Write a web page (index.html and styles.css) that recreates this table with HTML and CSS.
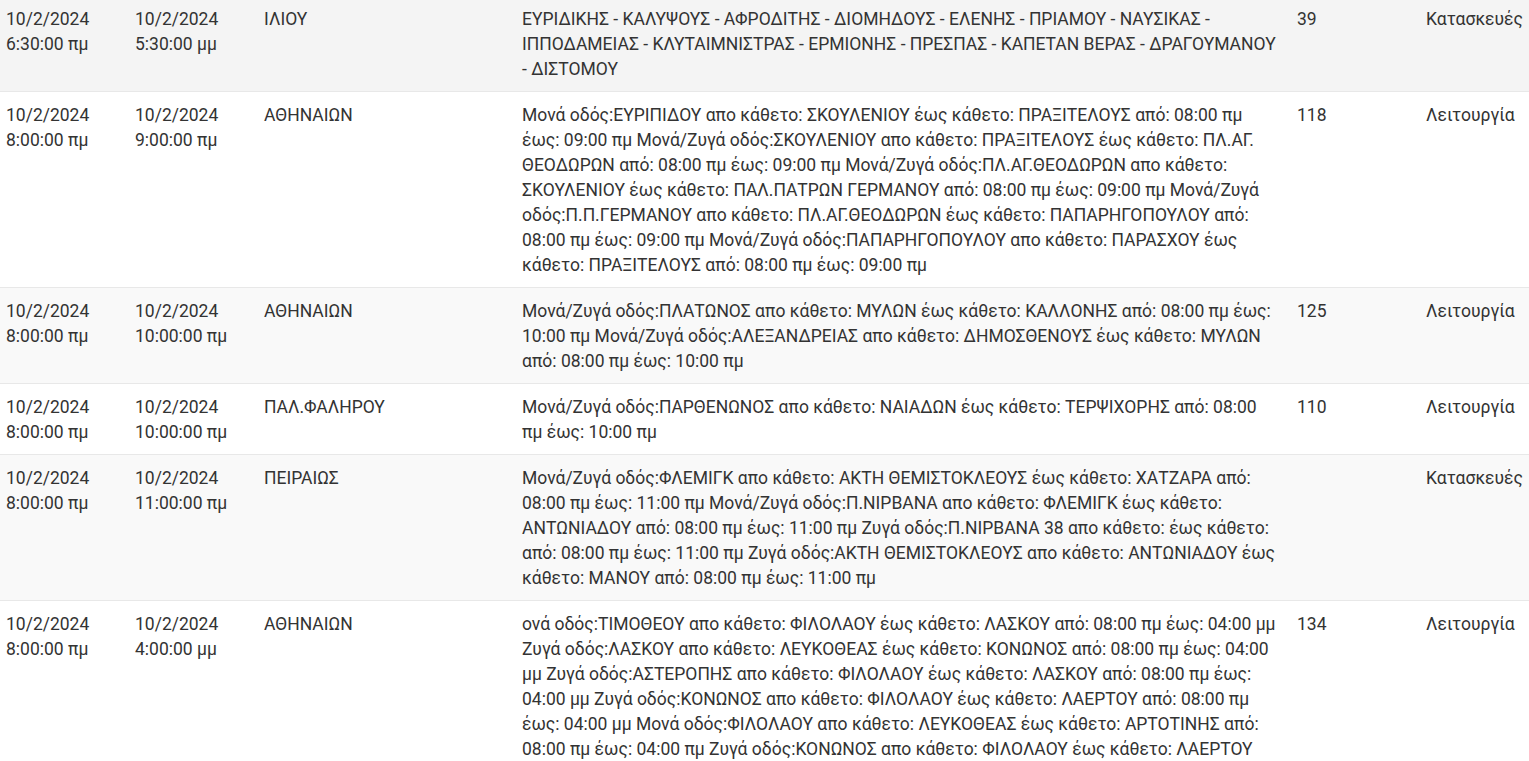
FILE: index.html
```html
<!DOCTYPE html>
<html lang="el">
<head>
<meta charset="utf-8">
<title>Έργα</title>
<link rel="stylesheet" href="styles.css">
</head>
<body>
<table class="works">
  <colgroup>
    <col class="c-date"><col class="c-date"><col class="c-area"><col class="c-desc"><col class="c-num"><col class="c-type">
  </colgroup>
  <tbody>
    <tr class="row hover">
      <td>10/2/2024 6:30:00 πμ</td>
      <td>10/2/2024 5:30:00 μμ</td>
      <td>ΙΛΙΟΥ</td>
      <td class="desc">ΕΥΡΙΔΙΚΗΣ - ΚΑΛΥΨΟΥΣ - ΑΦΡΟΔΙΤΗΣ - ΔΙΟΜΗΔΟΥΣ - ΕΛΕΝΗΣ - ΠΡΙΑΜΟΥ - ΝΑΥΣΙΚΑΣ - ΙΠΠΟΔΑΜΕΙΑΣ - ΚΛΥΤΑΙΜΝΙΣΤΡΑΣ - ΕΡΜΙΟΝΗΣ - ΠΡΕΣΠΑΣ - ΚΑΠΕΤΑΝ ΒΕΡΑΣ - ΔΡΑΓΟΥΜΑΝΟΥ - ΔΙΣΤΟΜΟΥ</td>
      <td>39</td>
      <td>Κατασκευές</td>
    </tr>
    <tr class="row">
      <td>10/2/2024 8:00:00 πμ</td>
      <td>10/2/2024 9:00:00 πμ</td>
      <td>ΑΘΗΝΑΙΩΝ</td>
      <td class="desc">Μονά οδός:ΕΥΡΙΠΙΔΟΥ απο κάθετο: ΣΚΟΥΛΕΝΙΟΥ έως κάθετο: ΠΡΑΞΙΤΕΛΟΥΣ από: 08:00 πμ έως: 09:00 πμ Μονά/Ζυγά οδός:ΣΚΟΥΛΕΝΙΟΥ απο κάθετο: ΠΡΑΞΙΤΕΛΟΥΣ έως κάθετο: ΠΛ.ΑΓ. ΘΕΟΔΩΡΩΝ από: 08:00 πμ έως: 09:00 πμ Μονά/Ζυγά οδός:ΠΛ.ΑΓ.ΘΕΟΔΩΡΩΝ απο κάθετο: ΣΚΟΥΛΕΝΙΟΥ έως κάθετο: ΠΑΛ.ΠΑΤΡΩΝ ΓΕΡΜΑΝΟΥ από: 08:00 πμ έως: 09:00 πμ Μονά/Ζυγά οδός:Π.Π.ΓΕΡΜΑΝΟΥ απο κάθετο: ΠΛ.ΑΓ.ΘΕΟΔΩΡΩΝ έως κάθετο: ΠΑΠΑΡΗΓΟΠΟΥΛΟΥ από: 08:00 πμ έως: 09:00 πμ Μονά/Ζυγά οδός:ΠΑΠΑΡΗΓΟΠΟΥΛΟΥ απο κάθετο: ΠΑΡΑΣΧΟΥ έως κάθετο: ΠΡΑΞΙΤΕΛΟΥΣ από: 08:00 πμ έως: 09:00 πμ</td>
      <td>118</td>
      <td>Λειτουργία</td>
    </tr>
    <tr class="row">
      <td>10/2/2024 8:00:00 πμ</td>
      <td>10/2/2024 10:00:00 πμ</td>
      <td>ΑΘΗΝΑΙΩΝ</td>
      <td class="desc">Μονά/Ζυγά οδός:ΠΛΑΤΩΝΟΣ απο κάθετο: ΜΥΛΩΝ έως κάθετο: ΚΑΛΛΟΝΗΣ από: 08:00 πμ έως: 10:00 πμ Μονά/Ζυγά οδός:ΑΛΕΞΑΝΔΡΕΙΑΣ απο κάθετο: ΔΗΜΟΣΘΕΝΟΥΣ έως κάθετο: ΜΥΛΩΝ από: 08:00 πμ έως: 10:00 πμ</td>
      <td>125</td>
      <td>Λειτουργία</td>
    </tr>
    <tr class="row">
      <td>10/2/2024 8:00:00 πμ</td>
      <td>10/2/2024 10:00:00 πμ</td>
      <td>ΠΑΛ.ΦΑΛΗΡΟΥ</td>
      <td class="desc">Μονά/Ζυγά οδός:ΠΑΡΘΕΝΩΝΟΣ απο κάθετο: ΝΑΙΑΔΩΝ έως κάθετο: ΤΕΡΨΙΧΟΡΗΣ από: 08:00 πμ έως: 10:00 πμ</td>
      <td>110</td>
      <td>Λειτουργία</td>
    </tr>
    <tr class="row">
      <td>10/2/2024 8:00:00 πμ</td>
      <td>10/2/2024 11:00:00 πμ</td>
      <td>ΠΕΙΡΑΙΩΣ</td>
      <td class="desc">Μονά/Ζυγά οδός:ΦΛΕΜΙΓΚ απο κάθετο: ΑΚΤΗ ΘΕΜΙΣΤΟΚΛΕΟΥΣ έως κάθετο: ΧΑΤΖΑΡΑ από: 08:00 πμ έως: 11:00 πμ Μονά/Ζυγά οδός:Π.ΝΙΡΒΑΝΑ απο κάθετο: ΦΛΕΜΙΓΚ έως κάθετο: ΑΝΤΩΝΙΑΔΟΥ από: 08:00 πμ έως: 11:00 πμ Ζυγά οδός:Π.ΝΙΡΒΑΝΑ 38 απο κάθετο: έως κάθετο: από: 08:00 πμ έως: 11:00 πμ Ζυγά οδός:ΑΚΤΗ ΘΕΜΙΣΤΟΚΛΕΟΥΣ απο κάθετο: ΑΝΤΩΝΙΑΔΟΥ έως κάθετο: ΜΑΝΟΥ από: 08:00 πμ έως: 11:00 πμ</td>
      <td></td>
      <td>Κατασκευές</td>
    </tr>
    <tr class="row">
      <td>10/2/2024 8:00:00 πμ</td>
      <td>10/2/2024 4:00:00 μμ</td>
      <td>ΑΘΗΝΑΙΩΝ</td>
      <td class="desc">ονά οδός:ΤΙΜΟΘΕΟΥ απο κάθετο: ΦΙΛΟΛΑΟΥ έως κάθετο: ΛΑΣΚΟΥ από: 08:00 πμ έως: 04:00 μμ Ζυγά οδός:ΛΑΣΚΟΥ απο κάθετο: ΛΕΥΚΟΘΕΑΣ έως κάθετο: ΚΟΝΩΝΟΣ από: 08:00 πμ έως: 04:00 μμ Ζυγά οδός:ΑΣΤΕΡΟΠΗΣ απο κάθετο: ΦΙΛΟΛΑΟΥ έως κάθετο: ΛΑΣΚΟΥ από: 08:00 πμ έως: 04:00 μμ Ζυγά οδός:ΚΟΝΩΝΟΣ απο κάθετο: ΦΙΛΟΛΑΟΥ έως κάθετο: ΛΑΕΡΤΟΥ από: 08:00 πμ έως: 04:00 μμ Μονά οδός:ΦΙΛΟΛΑΟΥ απο κάθετο: ΛΕΥΚΟΘΕΑΣ έως κάθετο: ΑΡΤΟΤΙΝΗΣ από: 08:00 πμ έως: 04:00 πμ Ζυγά οδός:ΚΟΝΩΝΟΣ απο κάθετο: ΦΙΛΟΛΑΟΥ έως κάθετο: ΛΑΕΡΤΟΥ από: 08:00 πμ έως: 04:00 μμ</td>
      <td>134</td>
      <td>Λειτουργία</td>
    </tr>
  </tbody>
</table>
</body>
</html>
```

FILE: styles.css
```css
html, body {
  margin: 0;
  padding: 0;
  background: #ffffff;
  overflow: hidden;
}

body {
  font-family: Roboto, "Noto Sans", "DejaVu Sans", sans-serif;
  font-size: 17.5px;
  line-height: 25px;
  color: #333333;
}

.works {
  width: 1529px;
  table-layout: fixed;
  border-collapse: collapse;
  border-spacing: 0;
  margin-top: -4px;
}

.c-date { width: 129px; }
.c-area { width: 258px; }
.c-desc { width: 775px; }
.c-num { width: 129px; }
.c-type { width: 109px; }

.works td {
  vertical-align: top;
  padding: 11px 6px 9px;
  border-bottom: 1px solid #e8e8e8;
}

.works td.desc {
  padding-right: 10px;
}

.row:nth-child(odd) {
  background: #f9f9f9;
}

.row.hover {
  background: #f4f4f4;
}
```
